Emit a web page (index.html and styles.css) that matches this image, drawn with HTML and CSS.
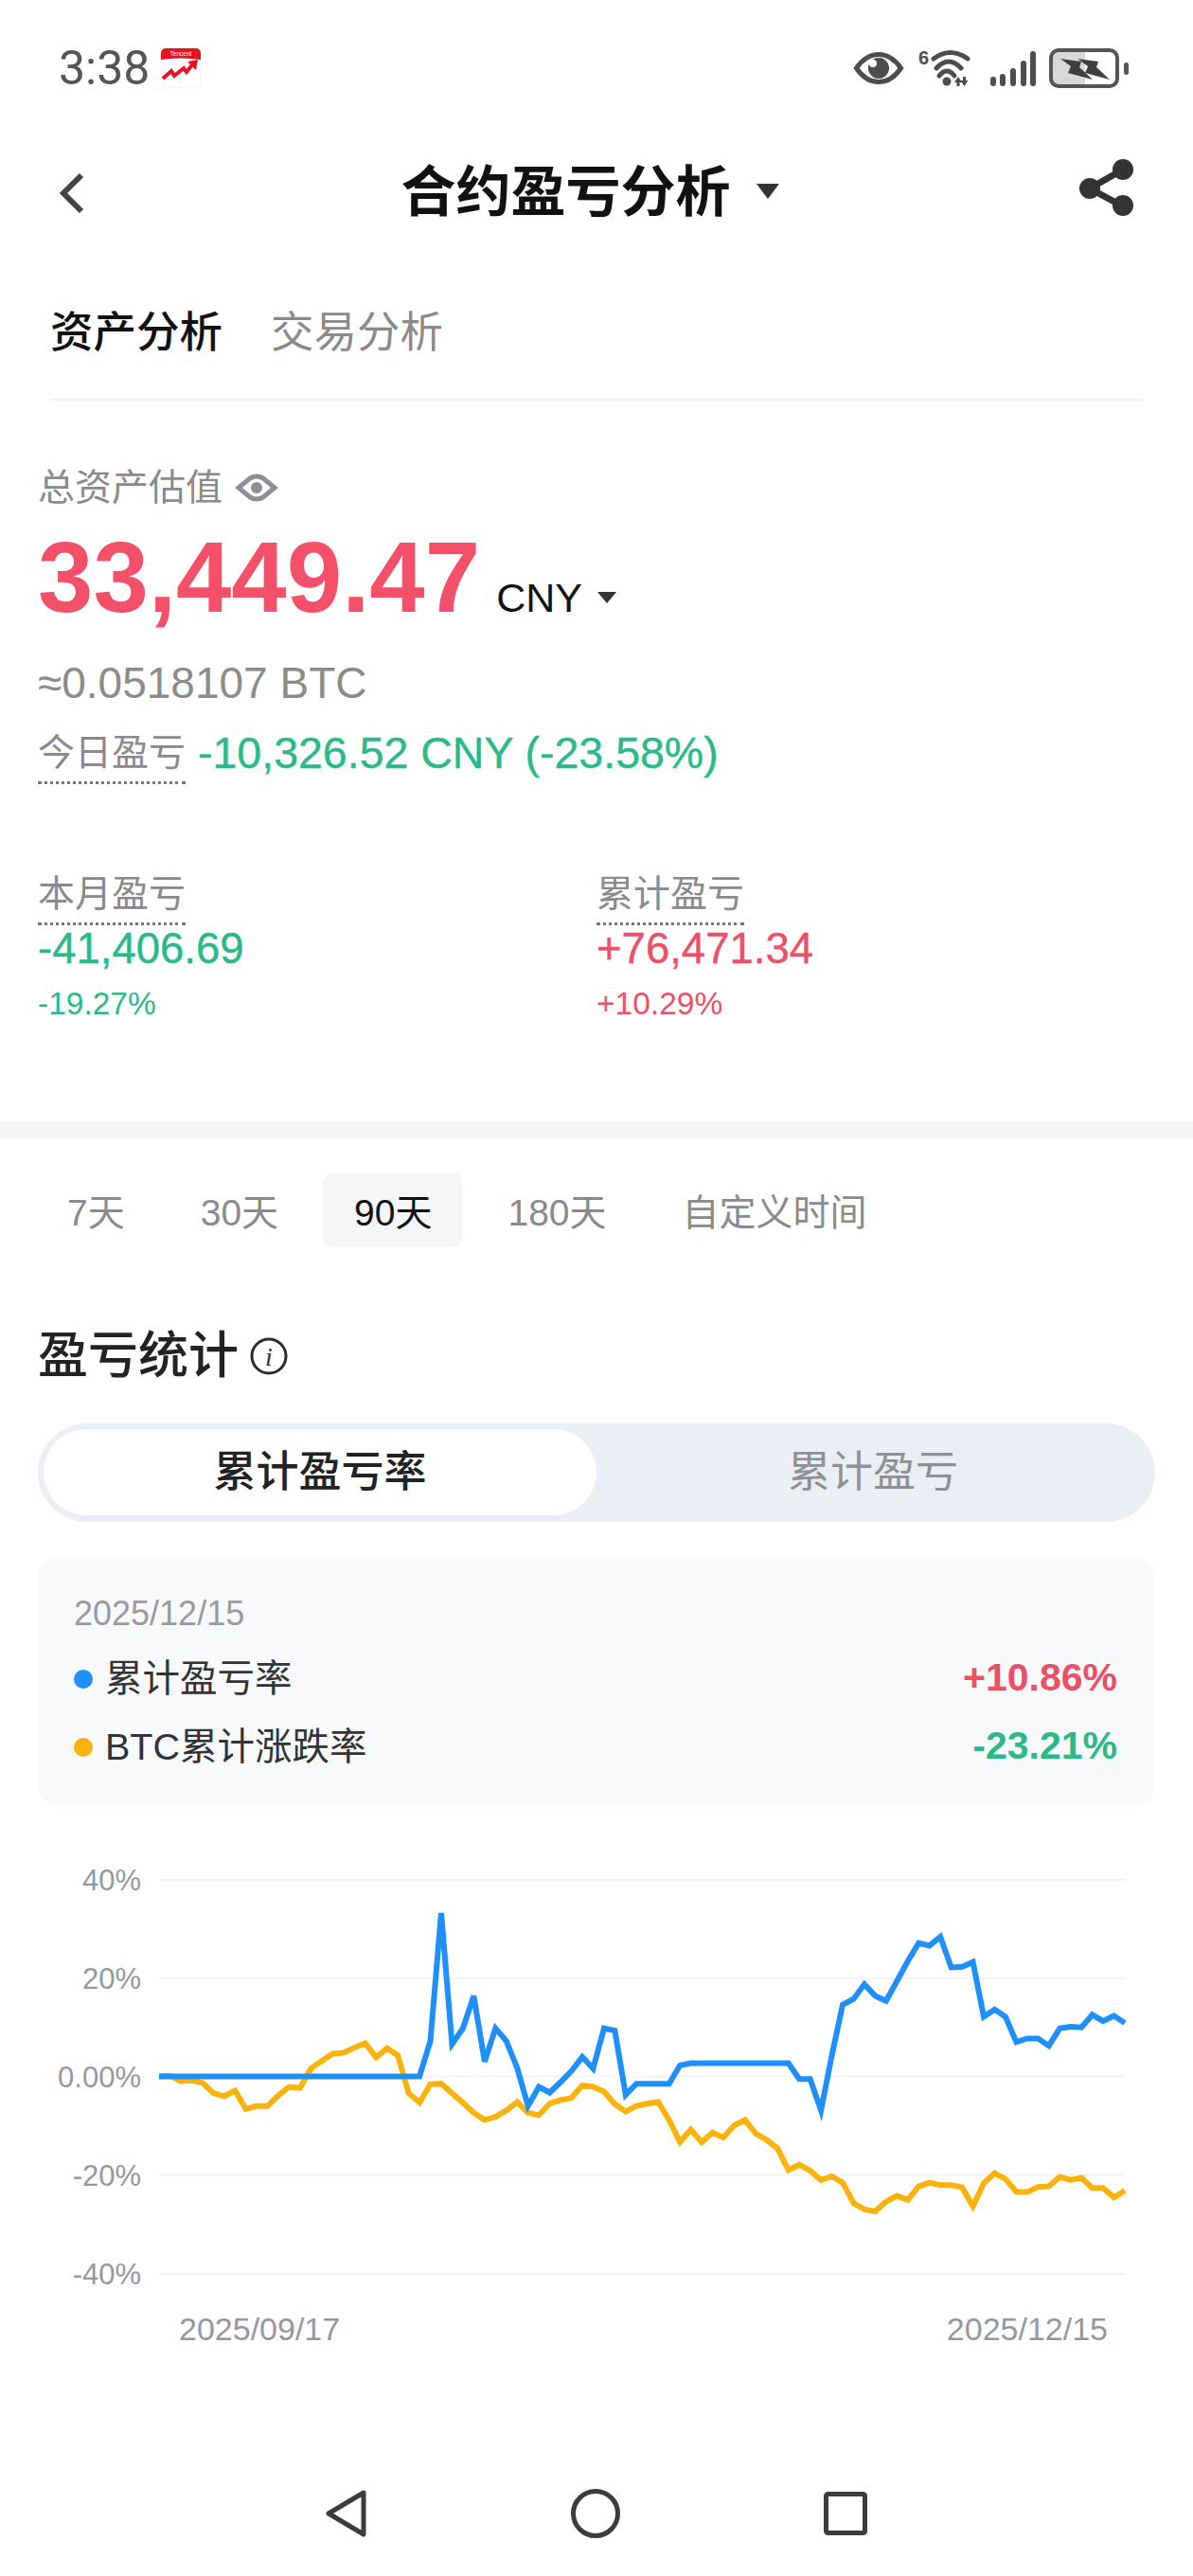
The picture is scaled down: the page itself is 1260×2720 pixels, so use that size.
FILE: index.html
```html
<!DOCTYPE html>
<html lang="zh-CN">
<head>
    <meta charset="UTF-8">
    <title>合约盈亏分析</title>
    <link rel="stylesheet" href="styles.css">
</head>
<body>
<div id="page">

    <!--状态栏-->
    <div class="status">
        <span class="time">3:38</span>
        <svg class="app-icon" width="42" height="42" viewBox="0 0 42 42">
            <rect x="0.500" y="0.500" width="41" height="41" rx="5" fill="#fff" stroke="#f4f4f4"/>
            <path d="M0 12V5a5 5 0 0 1 5-5h32a5 5 0 0 1 5 5v7q-21 -3 -42 0z" fill="#e8121c"/>
            <text x="21" y="8" font-size="6.500" fill="#fff" text-anchor="middle">Tencent</text>
            <path d="M2 32l9-8 3 5 10-8 3 4 8-10" fill="none" stroke="#e8121c" stroke-width="4"/>
            <path d="M28 14l11-2-2 11z" fill="#e8121c"/>
        </svg>
        <div class="status-icons">
            <svg class="eye" width="52" height="34" viewBox="0 0 52 34">
                <path d="M2.500 17C10 6 18 2.500 26 2.500S42 6 49.500 17C42 28 34 31.500 26 31.500S10 28 2.500 17Z" fill="none" stroke="#4d4d4d" stroke-width="5"/>
                <circle cx="26" cy="17" r="11" fill="#4d4d4d"/>
                <circle cx="20" cy="12" r="4" fill="#fff"/>
            </svg>
            <svg class="wifi" width="54" height="40" viewBox="0 0 54 40">
                <text x="0" y="16" font-size="20" font-weight="bold" fill="#4d4d4d">6</text>
                <g fill="none" stroke="#4d4d4d" stroke-width="5" stroke-linecap="round">
                    <path d="M16 10Q34 -3 52 10"/>
                    <path d="M19 20Q32 6 45 20"/>
                    <path d="M22 28Q30 18 38 28"/>
                </g>
                <circle cx="30" cy="34" r="4.500" fill="#4d4d4d"/>
                <path d="M42 29l4 6h-2.500v4h-3v-4h-2.500zM47 29h3v4h2.500l-4 6l-4-6h2.500z" fill="#4d4d4d"/>
            </svg>
            <svg width="48" height="38" viewBox="0 0 48 38">
                <g stroke="#4d4d4d" stroke-width="6" stroke-linecap="round">
                    <path d="M3 31v4"/>
                    <path d="M13 28v7"/>
                    <path d="M24 22v13"/>
                    <path d="M35 14v21"/>
                    <path d="M45 4v31"/>
                </g>
            </svg>
            <svg width="85" height="44" viewBox="0 0 85 44">
                <path d="M3 11a8 8 0 0 1 8-8h28v38H11a8 8 0 0 1-8-8z" fill="#d8d8d8"/>
                <rect x="3" y="3" width="70" height="38" rx="8" fill="none" stroke="#555" stroke-width="4"/>
                <rect x="80" y="16" width="5" height="13" rx="2.500" fill="#555"/>
                <path d="M13 12L35 15L33 21L47 34L21 27L24 20Z" fill="#3f3f3f"/>
                <path d="M31 12L53 15L51 21L65 34L39 27L42 20Z" fill="#3f3f3f"/>
            </svg>
        </div>
    </div>

    <!--标题-->
    <div class="nav">
        <svg class="back" width="28" height="44" viewBox="0 0 28 44">
            <path d="M24 3L5 22L24 41" fill="none" stroke="#444" stroke-width="6"/>
        </svg>
        <div class="nav-title">合约盈亏分析<i class="caret caret-big"></i></div>
        <svg class="share" width="58" height="60" viewBox="0 0 58 60">
            <path d="M46 11L11 31L46 50" fill="none" stroke="#333" stroke-width="7"/>
            <circle cx="46" cy="11" r="11" fill="#333"/>
            <circle cx="11" cy="31" r="11" fill="#333"/>
            <circle cx="46" cy="49" r="11" fill="#333"/>
        </svg>
    </div>

    <!--切换卡-->
    <div class="asset-tabs">
        <span class="on">资产分析</span>
        <span>交易分析</span>
    </div>

    <!--资产部分-->
    <div class="asset">
        <div class="asset-label">
            总资产估值
            <svg width="44" height="28" viewBox="0 0 44 28">
                <path d="M3 14L15 4Q22 0 29 4L41 14L29 24Q22 28 15 24Z" fill="none" stroke="#8b8e93" stroke-width="5"/>
                <circle cx="22" cy="14" r="6" fill="#8b8e93"/>
            </svg>
        </div>
        <div class="asset-value">
            <span class="big-num">33,449.47</span>
            <span class="unit">CNY</span>
            <i class="caret caret-small"></i>
        </div>
        <div class="asset-btc">≈0.0518107 BTC</div>
        <div class="today">
            <span class="dot-label">今日盈亏</span>
            <span class="today-val green">-10,326.52 CNY (-23.58%)</span>
        </div>
        <div class="stats">
            <div class="stat">
                <span class="dot-label">本月盈亏</span>
                <div class="stat-val green">-41,406.69</div>
                <div class="stat-pct green">-19.27%</div>
            </div>
            <div class="stat">
                <span class="dot-label">累计盈亏</span>
                <div class="stat-val red">+76,471.34</div>
                <div class="stat-pct red">+10.29%</div>
            </div>
        </div>
    </div>

    <div class="gap-bar"></div>

    <!--时间选择-->
    <div class="period">
        <span>7天</span>
        <span>30天</span>
        <span class="on">90天</span>
        <span>180天</span>
        <span>自定义时间</span>
    </div>

    <!--盈亏统计-->
    <div class="sec-title">
        盈亏统计
        <svg width="40" height="40" viewBox="0 0 40 40">
            <circle cx="20" cy="20" r="18" fill="none" stroke="#2b2b2b" stroke-width="3"/>
            <text x="20" y="30" font-size="28" font-style="italic" font-family="Liberation Serif" fill="#2b2b2b" text-anchor="middle">i</text>
        </svg>
    </div>

    <div class="toggle">
        <div class="toggle-item on">累计盈亏率</div>
        <div class="toggle-item">累计盈亏</div>
    </div>

    <div class="card">
        <div class="card-date">2025/12/15</div>
        <div class="card-row">
            <i class="dot blue"></i>
            <span class="card-name">累计盈亏率</span>
            <span class="card-val red">+10.86%</span>
        </div>
        <div class="card-row">
            <i class="dot orange"></i>
            <span class="card-name">BTC累计涨跌率</span>
            <span class="card-val green">-23.21%</span>
        </div>
    </div>

    <!--折线图-->
    <div class="chart">
        <div class="y-axis">
            <span>40%</span>
            <span>20%</span>
            <span>0.00%</span>
            <span>-20%</span>
            <span>-40%</span>
        </div>
        <svg class="plot" width="1020" height="416" viewBox="0 75 2670 1247" preserveAspectRatio="none">
            <g class="grid">
                <line x1="0" y1="75" x2="2670" y2="75"/>
                <line x1="0" y1="386" x2="2670" y2="386"/>
                <line x1="0" y1="697" x2="2670" y2="697"/>
                <line x1="0" y1="1008" x2="2670" y2="1008"/>
                <line x1="0" y1="1322" x2="2670" y2="1322"/>
            </g>
            <polyline class="line-orange" points="0,697 30,695 60,712 90,710 120,717 150,750 180,760 210,742 240,800 270,791 300,791 330,757 360,730 390,733 420,672 450,648 480,625 510,622 540,606 570,592 600,637 630,608 660,630 690,750 720,780 750,722 780,720 810,750 840,780 870,812 900,835 930,825 960,805 990,778 1020,812 1050,820 1080,783 1110,772 1140,765 1170,725 1200,730 1230,745 1260,785 1290,808 1320,790 1350,783 1380,778 1410,835 1440,905 1470,865 1500,905 1530,875 1560,890 1590,852 1620,835 1650,878 1680,898 1710,925 1740,993 1770,977 1800,995 1830,1025 1860,1013 1890,1033 1920,1098 1950,1118 1980,1124 2010,1093 2040,1075 2070,1088 2100,1045 2130,1033 2160,1041 2190,1041 2220,1048 2250,1108 2280,1035 2310,1003 2340,1022 2370,1062 2400,1063 2430,1047 2460,1045 2490,1015 2520,1025 2550,1018 2580,1050 2610,1050 2640,1080 2670,1058"/>
            <polyline class="line-blue" points="0,697 720,697 750,585 780,180 810,595 840,545 870,442 900,650 930,545 960,585 990,670 1020,790 1050,730 1080,748 1110,715 1140,680 1170,635 1200,672 1230,545 1260,552 1290,755 1320,720 1410,720 1440,662 1470,655 1740,655 1770,705 1800,705 1830,805 1860,630 1890,470 1920,452 1950,405 1980,442 2010,458 2040,395 2070,332 2100,275 2130,283 2160,255 2190,352 2220,350 2250,335 2280,508 2310,485 2340,508 2370,588 2400,577 2430,577 2460,600 2490,545 2520,540 2550,542 2580,502 2610,522 2640,505 2670,528"/>
        </svg>
    </div>
    <div class="x-axis">
        <span>2025/09/17</span>
        <span>2025/12/15</span>
    </div>

    <!--底部导航-->
    <div class="sys-nav">
        <svg width="44" height="50" viewBox="0 0 44 50">
            <path d="M40 3L3 25L40 47Z" fill="none" stroke="#3c3c3c" stroke-width="5" stroke-linejoin="round"/>
        </svg>
        <svg width="52" height="52" viewBox="0 0 52 52">
            <circle cx="26" cy="26" r="23.500" fill="none" stroke="#3c3c3c" stroke-width="5"/>
        </svg>
        <svg width="46" height="46" viewBox="0 0 46 46">
            <rect x="2.500" y="2.500" width="41" height="41" rx="2" fill="none" stroke="#3c3c3c" stroke-width="5"/>
        </svg>
    </div>
</div>
</body>
</html>
```

FILE: styles.css
```css
*{
    margin: 0;
    padding: 0;
    box-sizing: border-box;
}
body{
    background: #fff;
    font-family: "Liberation Sans", "Noto Sans CJK SC", sans-serif;
}
i{
    display: block;
    font-style: normal;
}
svg{
    overflow: visible;
}
#page{
    width: 1260px;
    height: 2720px;
    overflow: hidden;
}
.green{
    color: #2bb98a;
}
.red{
    color: #ec5068;
}

/*状态栏*/
.status{
    display: flex;
    align-items: center;
    height: 144px;
    padding: 0 68px 0 62px;
}
.time{
    font-family: Roboto, sans-serif;
    font-size: 50px;
    color: #555;
}
.app-icon{
    margin-left: 12px;
}
.status-icons{
    display: flex;
    align-items: center;
    gap: 13px;
    margin-left: auto;
}
.status-icons .eye{
    margin-right: 3px;
}
.status-icons .wifi{
    margin-right: 9px;
}

/*标题*/
.nav{
    display: flex;
    align-items: center;
    justify-content: space-between;
    height: 108px;
    padding: 0 62px;
}
.back{
    display: block;
    margin-top: 12px;
}
.nav-title{
    display: flex;
    align-items: center;
    font-size: 58px;
    font-weight: bold;
    color: #111;
    margin-left: 16px;
}
.caret{
    width: 0;
    height: 0;
    border-style: solid;
    border-color: #333 transparent transparent;
}
.caret-big{
    border-width: 16px 12px 0;
    margin: 8px 0 0 27px;
}
.caret-small{
    border-width: 12px 10px 0;
    margin-left: 16px;
    align-self: center;
    position: relative;
    top: 21px;
}

/*切换卡*/
.asset-tabs{
    display: flex;
    gap: 51px;
    margin: 0 52px 0 53px;
    padding: 75px 0 44px;
    border-bottom: 2px solid #f3f3f5;
    font-size: 45.500px;
    line-height: 50px;
    color: #8a8a8a;
}
.asset-tabs .on{
    color: #111;
    font-weight: 500;
}

/*资产部分*/
.asset{
    padding: 69px 40px 0;
}
.asset-label{
    display: flex;
    align-items: center;
    gap: 14px;
    font-size: 39px;
    line-height: 46px;
    color: #8a8a8a;
}
.asset-value{
    display: flex;
    align-items: baseline;
    height: 110px;
    margin-top: 17px;
}
.big-num{
    font-size: 105px;
    line-height: 110px;
    font-weight: bold;
    color: #f4506a;
}
.unit{
    font-size: 43px;
    color: #111;
    margin-left: 17px;
}
.asset-btc{
    font-size: 46px;
    line-height: 50px;
    color: #8b8b8b;
    margin-top: 31px;
}
.today{
    display: flex;
    align-items: flex-start;
    margin-top: 26px;
}
.dot-label{
    display: inline-block;
    font-size: 39px;
    line-height: 46px;
    color: #8a8a8a;
    padding-bottom: 7px;
    border-bottom: 3px dotted #777;
}
.today-val{
    font-size: 46.500px;
    line-height: 46px;
    margin-left: 13px;
    -webkit-text-stroke: 0.4px;
}
.stats{
    display: grid;
    grid-template-columns: 590px 1fr;
    margin-top: 93px;
}
.stat-val{
    font-size: 45.500px;
    line-height: 50px;
    -webkit-text-stroke: 0.4px;
}
.stat-pct{
    font-size: 33.500px;
    line-height: 40px;
    margin-top: 13px;
}
.gap-bar{
    height: 19px;
    background: #f5f5f6;
    margin-top: 104px;
}

/*时间选择*/
.period{
    display: flex;
    gap: 14px;
    padding-left: 38px;
    margin-top: 36px;
    font-size: 39px;
    line-height: 73px;
    color: #8a8a8a;
}
.period span{
    padding: 5px 33px 0;
    border-radius: 10px;
}
.period .on{
    background: #f5f6f8;
    color: #111;
}

/*盈亏统计*/
.sec-title{
    display: flex;
    align-items: center;
    gap: 12px;
    margin: 85px 0 0 40px;
    font-size: 53px;
    line-height: 60px;
    font-weight: 500;
    color: #222;
}
.toggle{
    display: flex;
    height: 104px;
    margin: 41px 40px 0;
    padding: 6px 6px 7px;
    border-radius: 52px;
    background: #eceef5;
}
.toggle-item{
    flex: 1;
    text-align: center;
    font-size: 45px;
    line-height: 91px;
    color: #8e9097;
}
.toggle-item.on{
    flex: none;
    width: 584px;
    border-radius: 46px;
    background: #fff;
    color: #222;
    font-weight: 500;
}
.card{
    height: 261px;
    margin: 38px 40px 0;
    padding: 39px 40px 0 38px;
    border-radius: 20px;
    background: #f8f9fb;
}
.card-date{
    font-size: 36px;
    line-height: 40px;
    color: #9a9a9f;
}
.card-row{
    display: flex;
    align-items: center;
    height: 50px;
    margin-top: 24px;
}
.card-row + .card-row{
    margin-top: 22px;
}
.dot{
    width: 20px;
    height: 20px;
    border-radius: 50%;
}
.dot.blue{
    background: #1e8ffb;
}
.dot.orange{
    background: #fbb30c;
}
.card-name{
    font-size: 39.500px;
    color: #333;
    margin-left: 13px;
    padding-bottom: 10px;
}
.card-val{
    margin-left: auto;
    font-size: 41px;
    font-weight: bold;
    padding-bottom: 4px;
}

/*折线图*/
.chart{
    display: flex;
    margin: 79px 0 0 40px;
}
.y-axis{
    display: flex;
    flex-direction: column;
    justify-content: space-between;
    width: 109px;
    height: 452px;
    margin: -17px 19px -19px 0;
    text-align: right;
    font-size: 31px;
    line-height: 36px;
    color: #96989e;
}
.plot{
    display: block;
}
.grid line{
    stroke: #f3f3f5;
    stroke-width: 2;
    vector-effect: non-scaling-stroke;
}
.line-orange,
.line-blue{
    fill: none;
    stroke-width: 6;
    vector-effect: non-scaling-stroke;
}
.line-orange{
    stroke: #fbb30c;
}
.line-blue{
    stroke: #1e8ffb;
}
.x-axis{
    display: flex;
    justify-content: space-between;
    padding: 0 90px 0 189px;
    margin-top: 38px;
    font-size: 34px;
    line-height: 40px;
    color: #96989e;
}

/*底部导航*/
.sys-nav{
    display: flex;
    align-items: center;
    justify-content: center;
    gap: 215px;
    margin-top: 149px;
}
```
